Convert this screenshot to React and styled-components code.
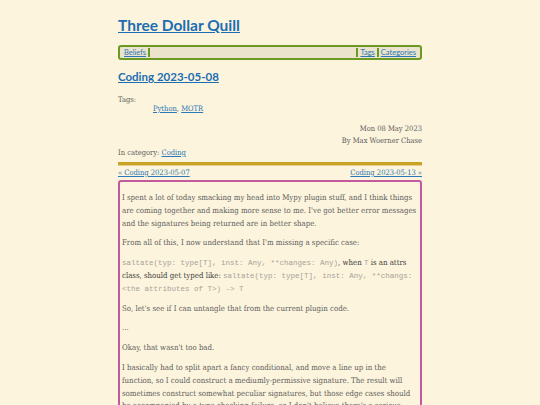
import React from 'react';
import styled, { createGlobalStyle } from 'styled-components';

const GlobalStyle = createGlobalStyle`
  html, body {
    margin: 0;
    padding: 0;
    background: #fcf4dc;
  }
  body {
    font-family: "DejaVu Serif Condensed", "DejaVu Serif", serif;
    color: #5e5e5e;
  }
  a {
    color: #2a78b8;
  }
`;

const Page = styled.div`
  width: 304px;
  margin: 0 auto;
  padding-top: 14px;
`;

const SiteTitle = styled.h1`
  margin: 0;
  font-family: Lato, "Open Sans", sans-serif;
  font-size: 15.5px;
  font-weight: 700;
  line-height: 22px;
  a {
    color: #1c6eb4;
  }
`;

const Nav = styled.nav`
  margin-top: 9px;
  height: 11px;
  display: flex;
  align-items: center;
  border: 2px solid #6b9a24;
  border-radius: 3px;
  background: #ebe3cc;
  padding: 0 2px;
  font-family: Lato, "Open Sans", sans-serif;
  font-size: 7.5px;
`;

const NavItem = styled.a`
  padding: 0 2px;
  line-height: 9px;
  border-left: ${(p) => (p.$left ? '2px solid #6b9a24' : 'none')};
  border-right: ${(p) => (p.$right ? '2px solid #6b9a24' : 'none')};
`;

const Spacer = styled.div`
  flex: 1;
`;

const PostTitle = styled.h2`
  margin: 9px 0 0;
  font-family: Lato, "Open Sans", sans-serif;
  font-size: 11.5px;
  font-weight: 700;
  line-height: 16px;
  a {
    color: #1c6eb4;
  }
`;

const Meta = styled.div`
  font-size: 7.5px;
  line-height: 12px;
`;

const TagList = styled.dl`
  margin: 10px 0 0;
  dt {
    line-height: 10px;
  }
  dd {
    margin: 0 0 0 35px;
    line-height: 8px;
  }
`;

const Byline = styled.div`
  margin-top: 10px;
  text-align: right;
`;

const Rule = styled.hr`
  margin: 3px 0 0;
  border: none;
  height: 3px;
  background: #c9a227;
  box-shadow: 0 1px 0 #e2cf8c;
`;

const PrevNext = styled.div`
  display: flex;
  justify-content: space-between;
  margin-top: 3px;
  font-size: 7.5px;
  line-height: 10px;
`;

const Article = styled.article`
  margin-top: 2px;
  border: 2px solid #c45a9e;
  border-radius: 3px;
  padding: 10px 2px 4px 2px;
  font-size: 7.8px;
  line-height: 12.8px;
  p {
    margin: 0 0 7px;
  }
`;

const Code = styled.code`
  font-family: "Liberation Mono", "DejaVu Sans Mono", monospace;
  font-size: 7.5px;
  color: #a8a29a;
`;

const Emph = styled.span`
  color: #404040;
`;

export default function App() {
  return (
    <>
      <GlobalStyle />
      <Page>
        <SiteTitle>
          <a href="#">Three Dollar Quill</a>
        </SiteTitle>
        <Nav>
          <NavItem href="#" $right>Beliefs</NavItem>
          <Spacer />
          <NavItem href="#" $left $right>Tags</NavItem>
          <NavItem href="#">Categories</NavItem>
        </Nav>
        <PostTitle>
          <a href="#">Coding 2023-05-08</a>
        </PostTitle>
        <Meta>
          <TagList>
            <dt>Tags:</dt>
            <dd>
              <a href="#">Python</a>, <a href="#">MOTR</a>
            </dd>
          </TagList>
          <Byline>
            <div>Mon 08 May 2023</div>
            <div>By Max Woerner Chase</div>
          </Byline>
          <div>
            In category: <a href="#">Coding</a>
          </div>
        </Meta>
        <Rule />
        <PrevNext>
          <a href="#">« Coding 2023-05-07</a>
          <a href="#">Coding 2023-05-13 »</a>
        </PrevNext>
        <Article>
          <p>
            I spent a lot of today smacking my head into Mypy plugin stuff, and I think things
            are coming together and making more sense to me. I've got better error messages
            and the signatures being returned are in better shape.
          </p>
          <p>From all of this, I now understand that I'm missing a specific case:</p>
          <p>
            <Code>saltate(typ: type[T], inst: Any, **changes: Any)</Code>
            <Emph>, when </Emph>
            <Code>T</Code>
            <Emph> is an attrs class, should get typed like: </Emph>
            <Code>saltate(typ: type[T], inst: Any, **changs: &lt;the attributes of T&gt;) -&gt; T</Code>
          </p>
          <p>So, let's see if I can untangle that from the current plugin code.</p>
          <p>...</p>
          <p>Okay, that wasn't too bad.</p>
          <p>
            I basically had to split apart a fancy conditional, and move a line up in the
            function, so I could construct a mediumly-permissive signature. The result will
            sometimes construct somewhat peculiar signatures, but those edge cases should be
            accompanied by a type checking failure, so I don't believe there's a serious problem
            with this.
          </p>
        </Article>
      </Page>
    </>
  );
}
